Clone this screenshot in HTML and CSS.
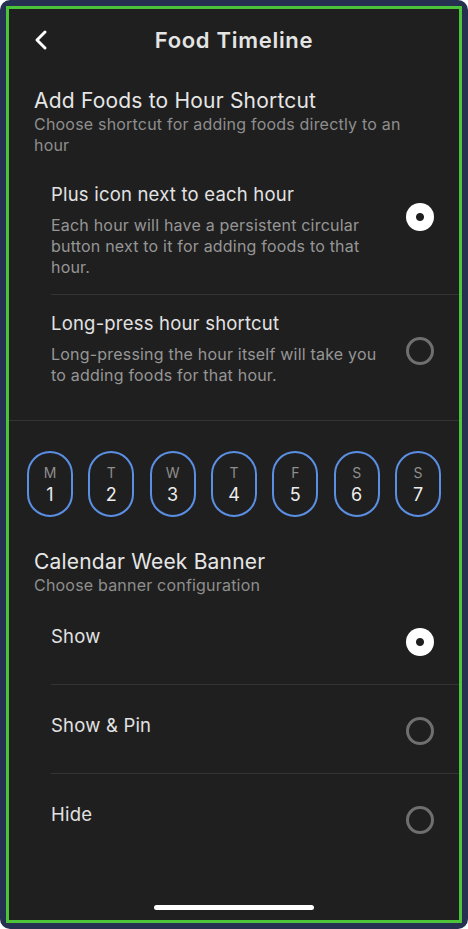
FILE: index.html
```html
<!DOCTYPE html>
<html lang="en">
<head>
    <meta charset="UTF-8">
    <meta name="viewport" content="width=device-width, initial-scale=1.0">
    <title>Food Timeline</title>
    <link rel="stylesheet" href="styles.css">
</head>
<body>
    <div class="device">
        <div class="screen">
            <header class="topbar">
                <button class="back-btn" aria-label="Back">
                    <svg width="14" height="22" viewBox="0 0 14 22">
                        <path d="M11 3 L3 11 L11 19" fill="none" stroke="#ffffff" stroke-width="3" stroke-linecap="round" stroke-linejoin="round"/>
                    </svg>
                </button>
                <h1>Food Timeline</h1>
            </header>

            <section class="group">
                <h2>Add Foods to Hour Shortcut</h2>
                <p class="group-sub">Choose shortcut for adding foods directly to an hour</p>
            </section>

            <div class="option option-first">
                <div class="option-text">
                    <div class="option-title">Plus icon next to each hour</div>
                    <div class="option-desc">Each hour will have a persistent circular button next to it for adding foods to that hour.</div>
                </div>
                <span class="radio checked radio-a"></span>
            </div>
            <div class="option option-last">
                <div class="option-text">
                    <div class="option-title">Long-press hour shortcut</div>
                    <div class="option-desc">Long-pressing the hour itself will take you to adding foods for that hour.</div>
                </div>
                <span class="radio radio-b"></span>
            </div>

            <div class="week">
                <div class="day"><span class="day-letter">M</span><span class="day-num">1</span></div>
                <div class="day"><span class="day-letter">T</span><span class="day-num">2</span></div>
                <div class="day"><span class="day-letter">W</span><span class="day-num">3</span></div>
                <div class="day"><span class="day-letter">T</span><span class="day-num">4</span></div>
                <div class="day"><span class="day-letter">F</span><span class="day-num">5</span></div>
                <div class="day"><span class="day-letter">S</span><span class="day-num">6</span></div>
                <div class="day"><span class="day-letter">S</span><span class="day-num">7</span></div>
            </div>

            <section class="group group-cal">
                <h2>Calendar Week Banner</h2>
                <p class="group-sub">Choose banner configuration</p>
            </section>

            <div class="option simple">
                <div class="option-title">Show</div>
                <span class="radio checked"></span>
            </div>
            <div class="option simple">
                <div class="option-title">Show &amp; Pin</div>
                <span class="radio"></span>
            </div>
            <div class="option simple no-line">
                <div class="option-title">Hide</div>
                <span class="radio"></span>
            </div>

            <div class="home-bar"></div>
        </div>
    </div>
</body>
</html>
```

FILE: styles.css
```css
* {
    box-sizing: border-box;
}

body {
    margin: 0;
    background: #ffffff;
    font-family: Inter, "Open Sans", sans-serif;
}

.device {
    width: 468px;
    height: 929px;
    padding: 6px;
    background: #263152;
    border-radius: 10px;
}

.screen {
    height: 100%;
    border: 3px solid #4cc43a;
    background: #1f1f1f;
    display: flex;
    flex-direction: column;
}

/* header */
.topbar {
    height: 62px;
    display: flex;
    align-items: center;
    justify-content: center;
    position: relative;
}

.topbar h1 {
    margin: 0;
    font-size: 22px;
    font-weight: 600;
    letter-spacing: 0.7px;
    color: #e4e4e4;
}

.back-btn {
    position: absolute;
    left: 25px;
    top: 20px;
    padding: 0;
    border: none;
    background: none;
    cursor: pointer;
}

/* section headings */
.group {
    padding: 17px 25px 0;
}

.group h2 {
    margin: 0;
    font-size: 21px;
    font-weight: 400;
    line-height: 26px;
    letter-spacing: 0.2px;
    color: #e6e6e6;
}

.group-sub {
    margin: 0;
    font-size: 16px;
    line-height: 21px;
    letter-spacing: 0.2px;
    color: #8e8e8e;
}

.group-cal {
    padding-top: 32px;
}

/* options */
.option {
    margin-left: 42px;
    padding: 16px 25px 16px 0;
    display: flex;
    align-items: flex-start;
    justify-content: space-between;
    border-bottom: 1px solid #343434;
}

.option-first {
    padding-top: 26px;
}

.option-last {
    margin-left: 0;
    padding-left: 42px;
    padding-bottom: 34px;
}

.option-text {
    width: 330px;
}

.option-title {
    font-size: 18.5px;
    line-height: 24px;
    letter-spacing: 0.2px;
    color: #e2e2e2;
}

.option-desc {
    margin-top: 9px;
    font-size: 16px;
    line-height: 21px;
    letter-spacing: 0.2px;
    color: #969696;
}

.radio {
    flex: none;
    width: 28px;
    height: 28px;
    border-radius: 50%;
    border: 3px solid #6f6f6f;
}

.radio.checked {
    border: none;
    background: radial-gradient(circle, #1f1f1f 0 3.5px, #ffffff 4.5px);
}

.radio-a {
    margin-top: 21px;
}

.radio-b {
    margin-top: 26px;
}

.simple {
    padding-top: 28px;
    padding-bottom: 28px;
}

.simple .radio {
    margin-top: 4px;
}

.no-line {
    border-bottom: none;
}

/* week strip */
.week {
    padding: 30px 18px 0;
    display: flex;
    justify-content: space-between;
}

.day {
    width: 46px;
    height: 66px;
    border: 2px solid #5b8fe3;
    border-radius: 23px;
    display: flex;
    flex-direction: column;
    align-items: center;
    justify-content: center;
}

.day-letter {
    font-size: 14px;
    line-height: 21px;
    color: #8e8e8e;
}

.day-num {
    font-size: 18px;
    line-height: 23px;
    color: #ececec;
}

.home-bar {
    margin: auto auto 10px;
    width: 160px;
    height: 5px;
    border-radius: 3px;
    background: #ffffff;
}
```
